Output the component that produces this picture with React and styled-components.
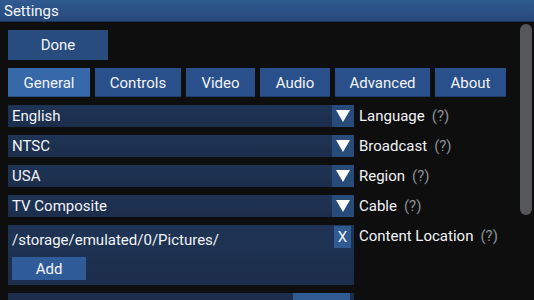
import React from 'react';
import styled, { createGlobalStyle } from 'styled-components';

const tabs = [
  { name: 'General', width: 82 },
  { name: 'Controls', width: 86 },
  { name: 'Video', width: 69 },
  { name: 'Audio', width: 70 },
  { name: 'Advanced', width: 95 },
  { name: 'About', width: 71 }
];

const selects = [
  { value: 'English', label: 'Language' },
  { value: 'NTSC', label: 'Broadcast' },
  { value: 'USA', label: 'Region' },
  { value: 'TV Composite', label: 'Cable' }
];

const GlobalStyle = createGlobalStyle`
  html, body {
    margin: 0;
    padding: 0;
    background: #0e0e0f;
    overflow: hidden;
  }
  body {
    font-family: Roboto, 'Liberation Sans', sans-serif;
    color: #f2f4f8;
  }
`;

const App = () => (
  <Page>
    <GlobalStyle />
    <TitleBar>Settings</TitleBar>
    <Main>
      <Content>
        <DoneButton type="button">Done</DoneButton>
        <TabRow>
          {tabs.map(tab => (
            <Tab key={tab.name} width={tab.width} active={tab.name === 'General'}>
              {tab.name}
            </Tab>
          ))}
        </TabRow>
        <Fields>
          {selects.map(item => (
            <FieldRow key={item.label}>
              <Select>
                <SelectValue>{item.value}</SelectValue>
                <ArrowBox>
                  <svg width="14" height="12" viewBox="0 0 14 12">
                    <polygon points="0,0 14,0 7,12" fill="#ffffff" />
                  </svg>
                </ArrowBox>
              </Select>
              <Label>
                {item.label}
                <Help>(?)</Help>
              </Label>
            </FieldRow>
          ))}
          <FieldRow top>
            <PathBox>
              <PathTop>
                <PathText>/storage/emulated/0/Pictures/</PathText>
                <RemoveButton type="button">X</RemoveButton>
              </PathTop>
              <AddButton type="button">Add</AddButton>
            </PathBox>
            <Label>
              Content Location
              <Help>(?)</Help>
            </Label>
          </FieldRow>
          <FieldRow top>
            <NextBox>
              <NextButton />
            </NextBox>
          </FieldRow>
        </Fields>
      </Content>
      <ScrollTrack>
        <ScrollThumb />
      </ScrollTrack>
    </Main>
  </Page>
);

const Page = styled.div`
  width: 534px;
  height: 300px;
  overflow: hidden;
  display: flex;
  flex-direction: column;
`;

const TitleBar = styled.div`
  flex-shrink: 0;
  height: 22px;
  box-sizing: border-box;
  padding: 2px 0 0 4px;
  font-size: 15px;
  line-height: 18px;
  color: #f4f6fa;
  background: linear-gradient(#2f5b91, #28497a);
  border-bottom: 1px solid #1b3456;
`;

const Main = styled.div`
  flex: 1;
  display: flex;
  overflow: hidden;
`;

const Content = styled.div`
  flex: 1;
  padding: 8px 0 0 8px;
  display: flex;
  flex-direction: column;
  & > * {
    flex-shrink: 0;
  }
`;

const DoneButton = styled.button`
  width: 100px;
  height: 30px;
  border: none;
  padding: 0;
  background: #294c7e;
  color: #f2f4f8;
  font-family: inherit;
  font-size: 15px;
`;

const TabRow = styled.div`
  display: flex;
  gap: 5px;
  margin-top: 8px;
`;

const Tab = styled.div`
  width: ${props => props.width}px;
  height: 29px;
  display: flex;
  align-items: center;
  justify-content: center;
  font-size: 15px;
  background: ${props => (props.active ? '#3768a9' : '#29508a')};
  box-shadow: inset 0 -1px 0 rgba(0, 0, 0, 0.25);
`;

const Fields = styled.div`
  display: flex;
  flex-direction: column;
  gap: 8px;
  margin-top: 8px;
  & > * {
    flex-shrink: 0;
  }
`;

const FieldRow = styled.div`
  display: flex;
  align-items: ${props => (props.top ? 'flex-start' : 'center')};
  gap: 5px;
`;

const Select = styled.div`
  width: 346px;
  height: 22px;
  display: flex;
  background: linear-gradient(#1f3455, #1b2d4a);
`;

const SelectValue = styled.div`
  flex: 1;
  padding-left: 4px;
  font-size: 15px;
  line-height: 22px;
`;

const ArrowBox = styled.div`
  width: 22px;
  display: flex;
  align-items: center;
  justify-content: center;
  background: #294b7a;
`;

const Label = styled.div`
  font-size: 15px;
  line-height: 22px;
  white-space: nowrap;
`;

const Help = styled.span`
  margin-left: 7px;
  color: #8b8f96;
`;

const PathBox = styled.div`
  width: 346px;
  height: 60px;
  box-sizing: border-box;
  padding: 1px 3px 5px 4px;
  background: linear-gradient(#1f3455, #1b2d4a);
  display: flex;
  flex-direction: column;
  justify-content: space-between;
`;

const PathTop = styled.div`
  display: flex;
  justify-content: space-between;
  align-items: flex-start;
`;

const PathText = styled.div`
  font-size: 15px;
  line-height: 22px;
  padding-top: 3px;
`;

const RemoveButton = styled.button`
  width: 17px;
  height: 22px;
  border: none;
  padding: 0;
  background: #2f5a92;
  color: #f2f4f8;
  font-family: inherit;
  font-size: 15px;
`;

const AddButton = styled.button`
  width: 74px;
  height: 23px;
  border: none;
  padding: 0;
  background: #2f5b98;
  color: #f2f4f8;
  font-family: inherit;
  font-size: 15px;
`;

const NextBox = styled.div`
  width: 346px;
  height: 22px;
  display: flex;
  justify-content: flex-end;
  padding-right: 4px;
  box-sizing: border-box;
  background: #1c2e4c;
`;

const NextButton = styled.div`
  width: 57px;
  height: 22px;
  background: #2f5a92;
`;

const ScrollTrack = styled.div`
  width: 14px;
  padding-top: 2px;
`;

const ScrollThumb = styled.div`
  width: 12px;
  height: 191px;
  border-radius: 6px;
  background: #56575b;
`;

export default App;
